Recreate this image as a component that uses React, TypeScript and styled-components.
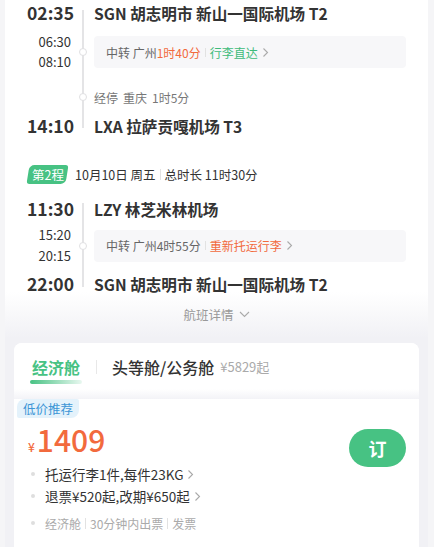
import React from 'react'
import styled, { createGlobalStyle } from 'styled-components'

const GREEN = '#47c283'
const ORANGE = '#f26a3d'

const GlobalStyle = createGlobalStyle`
  html, body {
    margin: 0;
    padding: 0;
    background: #f5f5f7;
  }
  body {
    font-family: "Noto Sans CJK SC", "Noto Sans", sans-serif;
    color: #333;
  }
`

const Panel = styled.div`
  margin: 0 6px 0 5px;
  background: linear-gradient(180deg, #fff 0, #fff 292px, #f1f1f5 338px, #f1f1f5 100%);
`

const Segment = styled.div<{ $rows: string }>`
  display: grid;
  grid-template-columns: 69px 18px 1fr;
  grid-template-rows: ${p => p.$rows};
  padding-right: 22px;
`

const Rail = styled.div<{ $top: number; $bottom: number }>`
  grid-column: 2;
  grid-row: 1 / -1;
  position: relative;

  &::before {
    content: '';
    position: absolute;
    left: 8px;
    width: 2px;
    top: ${p => p.$top}px;
    bottom: ${p => p.$bottom}px;
    background: #e4e4e6;
  }
`

const Stop = styled.span<{ $row: number }>`
  grid-column: 2;
  grid-row: ${p => p.$row};
  justify-self: center;
  align-self: center;
  z-index: 1;
  width: 6px;
  height: 6px;
  border: 1.5px solid #e0e0e2;
  border-radius: 50%;
  background: #fff;
`

const TimeCell = styled.div<{ $big?: boolean }>`
  grid-column: 1;
  display: flex;
  flex-direction: column;
  justify-content: center;
  align-items: flex-end;
  padding-right: ${p => (p.$big ? 0 : 3)}px;
  font-size: ${p => (p.$big ? '17.5px' : '13px')};
  font-weight: ${p => (p.$big ? 700 : 400)};
  line-height: ${p => (p.$big ? '22px' : '20.5px')};
  color: #333;
`

const Cell = styled.div`
  grid-column: 3;
  display: flex;
  align-items: center;
  min-width: 0;
  padding-left: 2px;
`

const Airport = styled.div`
  font-size: 15.6px;
  font-weight: 700;
  color: #333;
  white-space: nowrap;
`

const TransferBox = styled.div`
  flex: 1;
  height: 32px;
  display: flex;
  align-items: center;
  padding: 0 12px;
  background: #f7f7f9;
  border-radius: 4px;
  font-size: 12px;
  color: #666;
  white-space: nowrap;
`

const Accent = styled.span<{ $tone: string }>`
  color: ${p => p.$tone};
`

const Sep = styled.span<{ $h?: number; $gap?: number }>`
  display: inline-block;
  width: 1px;
  height: ${p => p.$h ?? 10}px;
  margin: 0 ${p => p.$gap ?? 5}px;
  background: #e2e2e2;
`

const StopNote = styled.div`
  display: flex;
  gap: 5px;
  font-size: 12px;
  color: #777;
`

const LegHeader = styled.div`
  display: flex;
  align-items: center;
  height: 20px;
  margin: 28px 0 12px 23px;
  font-size: 12.5px;
  color: #333;
  white-space: nowrap;
`

const LegBadge = styled.span`
  display: inline-flex;
  align-items: center;
  justify-content: center;
  width: 39px;
  height: 19px;
  margin-right: 8px;
  background: ${GREEN};
  border-radius: 5px 3px 5px 3px;
  transform: skewX(-9deg);
  color: #fff;
  font-size: 12.5px;

  > span {
    transform: skewX(9deg);
  }
`

const DetailLink = styled.div`
  display: flex;
  align-items: center;
  justify-content: center;
  gap: 5px;
  height: 18px;
  margin: 6px 0 20px;
  font-size: 12.5px;
  color: #999;
`

const FareCard = styled.div`
  margin: 0 9px;
  background: #fff;
  border-radius: 8px 8px 0 0;
  overflow: hidden;
`

const Tabs = styled.div`
  display: flex;
  align-items: flex-start;
  height: 56px;
  box-sizing: border-box;
  padding: 12px 0 0 16px;
  background: linear-gradient(180deg, #fff 0, #fff 46px, #f3f3f7 56px);
`

const Tab = styled.div<{ $active?: boolean }>`
  display: flex;
  flex-direction: column;
  align-items: center;
  font-size: 16px;
  line-height: 24px;
  font-weight: ${p => (p.$active ? 700 : 500)};
  color: ${p => (p.$active ? GREEN : '#333')};
  white-space: nowrap;
`

const TabBar = styled.span`
  width: 52px;
  height: 4px;
  margin-top: 1px;
  border-radius: 2px;
  background: linear-gradient(90deg, ${GREEN}, rgba(71, 194, 131, 0.12));
`

const TabDivider = styled.span`
  width: 1px;
  height: 14px;
  margin: 5px 15px 0 14px;
  background: #e8e8e8;
`

const FromPrice = styled.span`
  margin-left: 6px;
  font-size: 13px;
  line-height: 24px;
  color: #aaa;
  font-weight: 400;
`

const FareBody = styled.div`
  background: #fff;
  border-radius: 8px 8px 0 0;
  padding-bottom: 30px;
`

const Tag = styled.span`
  display: flex;
  align-items: center;
  width: fit-content;
  height: 19px;
  margin-left: 3px;
  padding: 0 6px;
  background: #e4f2fb;
  border-radius: 8px 2px 8px 2px;
  font-size: 12.5px;
  color: #3d96d6;
`

const FareRow = styled.div`
  display: flex;
  align-items: flex-start;
  justify-content: space-between;
  padding: 5px 13px 0 14px;
`

const Price = styled.div`
  display: flex;
  align-items: baseline;
  height: 32px;
  color: ${ORANGE};
  font-size: 30px;
  line-height: 32px;
  font-weight: 500;

  > small {
    font-size: 12px;
    line-height: 1;
    margin-right: 2px;
  }
`

const Perks = styled.div`
  display: flex;
  flex-direction: column;
  margin-top: 8px;
`

const Perk = styled.div<{ $muted?: boolean }>`
  display: flex;
  align-items: center;
  height: 22px;
  margin-top: ${p => (p.$muted ? 5 : 0)}px;
  font-size: ${p => (p.$muted ? '12px' : '13.5px')};
  color: ${p => (p.$muted ? '#aaa' : '#333')};
  white-space: nowrap;

  &::before {
    content: '';
    width: 4px;
    height: 4px;
    margin: 0 10px 0 3px;
    border-radius: 50%;
    background: #dedede;
  }
`

const BookButton = styled.button`
  width: 57px;
  height: 38px;
  margin-top: 6px;
  border: none;
  border-radius: 19px;
  background: ${GREEN};
  color: #fff;
  font-family: inherit;
  font-size: 18px;
  font-weight: 700;
`

function ChevronRight() {
  return (
    <svg width='7' height='11' viewBox='0 0 7 11' style={{ marginLeft: 4 }}>
      <path d='M1.5 1.5 L5.5 5.5 L1.5 9.5' fill='none' stroke='#aaa' strokeWidth='1.1' />
    </svg>
  )
}

function ChevronDown() {
  return (
    <svg width='11' height='7' viewBox='0 0 11 7'>
      <path d='M1 1 L5.5 5.5 L10 1' fill='none' stroke='#aaa' strokeWidth='1.1' />
    </svg>
  )
}

function App() {
  return (
    <>
      <GlobalStyle />
      <Panel>
        <Segment $rows='26px 52px 38px 20px'>
          <Rail $top={10} $bottom={8} />
          <Stop $row={2} />
          <Stop $row={3} />

          <TimeCell $big>02:35</TimeCell>
          <Cell>
            <Airport>SGN 胡志明市 新山一国际机场 T2</Airport>
          </Cell>

          <TimeCell>
            <span>06:30</span>
            <span>08:10</span>
          </TimeCell>
          <Cell>
            <TransferBox>
              中转&nbsp;广州<Accent $tone={ORANGE}>1时40分</Accent>
              <Sep $h={9} $gap={4} />
              <Accent $tone='#3dbb7a'>行李直达</Accent>
              <ChevronRight />
            </TransferBox>
          </Cell>

          <TimeCell />
          <Cell>
            <StopNote>
              <span>经停</span>
              <span>重庆</span>
              <span>1时5分</span>
            </StopNote>
          </Cell>

          <TimeCell $big>14:10</TimeCell>
          <Cell>
            <Airport>LXA 拉萨贡嘎机场 T3</Airport>
          </Cell>
        </Segment>

        <LegHeader>
          <LegBadge>
            <span>第2程</span>
          </LegBadge>
          10月10日 周五
          <Sep $h={11} $gap={4} />
          总时长 11时30分
        </LegHeader>

        <Segment $rows='26px 47px 30px'>
          <Rail $top={7} $bottom={12} />
          <Stop $row={2} />

          <TimeCell $big>11:30</TimeCell>
          <Cell>
            <Airport>LZY 林芝米林机场</Airport>
          </Cell>

          <TimeCell>
            <span>15:20</span>
            <span>20:15</span>
          </TimeCell>
          <Cell>
            <TransferBox>
              中转&nbsp;广州4时55分
              <Sep $h={9} $gap={4} />
              <Accent $tone={ORANGE}>重新托运行李</Accent>
              <ChevronRight />
            </TransferBox>
          </Cell>

          <TimeCell $big>22:00</TimeCell>
          <Cell>
            <Airport>SGN 胡志明市 新山一国际机场 T2</Airport>
          </Cell>
        </Segment>

        <DetailLink>
          航班详情
          <ChevronDown />
        </DetailLink>

        <FareCard>
          <Tabs>
            <Tab $active>
              经济舱
              <TabBar />
            </Tab>
            <TabDivider />
            <Tab>头等舱/公务舱</Tab>
            <FromPrice>¥5829起</FromPrice>
          </Tabs>
          <FareBody>
            <Tag>低价推荐</Tag>
            <FareRow>
              <div>
                <Price>
                  <small>¥</small>1409
                </Price>
                <Perks>
                  <Perk>
                    托运行李1件,每件23KG
                    <ChevronRight />
                  </Perk>
                  <Perk>
                    退票¥520起,改期¥650起
                    <ChevronRight />
                  </Perk>
                  <Perk $muted>
                    经济舱
                    <Sep $h={11} $gap={4} />
                    30分钟内出票
                    <Sep $h={11} $gap={4} />
                    发票
                  </Perk>
                </Perks>
              </div>
              <BookButton>订</BookButton>
            </FareRow>
          </FareBody>
        </FareCard>
      </Panel>
    </>
  )
}

export default App
